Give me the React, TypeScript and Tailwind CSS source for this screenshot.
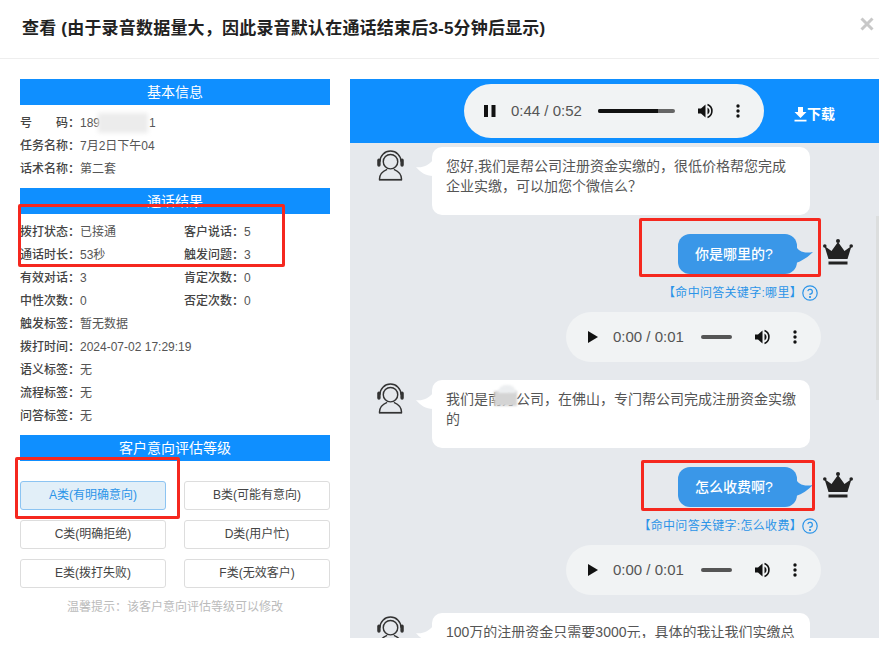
const font = { fontFamily: '"Liberation Sans", "Noto Sans CJK SC", sans-serif' };

const Heading = ({ children }: { children: string }) => (
  <div className="h-[26px] bg-[#0f8fff] text-center text-[14px] leading-[26px] text-white">{children}</div>
);

const Row = ({ label, value }: { label: string; value: string }) => (
  <div className="flex h-[23px] items-center text-[12px] text-[#555]">
    <span className="w-[60px] shrink-0 font-medium text-[#444]">{label}</span>
    <span>{value}</span>
  </div>
);

const Pause = () => (
  <svg width="12" height="12" viewBox="0 0 12 12" className="shrink-0">
    <rect x="0" y="0" width="4" height="12" fill="#111" />
    <rect x="7.5" y="0" width="4" height="12" fill="#111" />
  </svg>
);

const Play = () => (
  <svg width="10" height="12" viewBox="0 0 10 12" className="shrink-0">
    <path d="M0 0 L10 6 L0 12 Z" fill="#111" />
  </svg>
);

const Volume = () => (
  <svg width="16" height="16" viewBox="0 0 16 16" className="shrink-0">
    <path d="M0 5.5 H3 L7.5 1.5 V14.5 L3 10.5 H0 Z" fill="#111" />
    <path d="M9.5 4.5 A4 4 0 0 1 9.5 11.5 Z" fill="#111" />
    <path d="M9.5 1.5 A7 7 0 0 1 9.5 14.5" stroke="#111" strokeWidth="1.6" fill="none" />
  </svg>
);

const Dots = () => (
  <svg width="4" height="14" viewBox="0 0 4 14" className="shrink-0">
    <circle cx="2" cy="2" r="1.7" fill="#111" />
    <circle cx="2" cy="7" r="1.7" fill="#111" />
    <circle cx="2" cy="12" r="1.7" fill="#111" />
  </svg>
);

const Agent = () => (
  <svg width="27" height="31" viewBox="0 0 28 32" className="shrink-0" fill="none" stroke="#333" strokeWidth="1.5">
    <path d="M3 12 A11 11 0 0 1 25 12" />
    <rect x="1" y="9.5" width="2" height="7" rx="1" fill="#333" />
    <rect x="25" y="9.5" width="2" height="7" rx="1" fill="#333" />
    <circle cx="14" cy="12" r="7.5" />
    <path d="M2.5 30.5 C2.5 24 8 21 10.5 20 M25.5 30.5 C25.5 24 20 21 17.5 20" />
    <path d="M2 30.8 H26" strokeWidth="1.8" />
  </svg>
);

const Crown = () => (
  <svg width="30" height="27" viewBox="0 0 30 27" className="mb-[3px] shrink-0">
    <circle cx="15" cy="2" r="2" fill="#222" />
    <circle cx="1.8" cy="7" r="1.8" fill="#222" />
    <circle cx="28.2" cy="7" r="1.8" fill="#222" />
    <path d="M1.5 7 L8.5 12 L15 3 L21.5 12 L28.5 7 L24.5 20 H5.5 Z" fill="#222" />
    <rect x="5.5" y="22.5" width="19" height="3" fill="#222" />
  </svg>
);

const AgentMsg = ({ text }: { text: string }) => (
  <div className="flex items-start pl-[27px]">
    <div className="mt-[3px]">
      <Agent />
    </div>
    <div className="relative ml-[28px] h-[68px] w-[378px] shrink-0 rounded-[10px] bg-white px-[14px] py-[9px] text-[14px] leading-[20px] text-[#555]">
      {text}
      <svg width="17" height="16" viewBox="0 0 17 16" className="absolute left-[-16px] top-[13px]">
        <path d="M0 7 C6 8 12 6 17 0 V16 C10 16 4 12 0 7 Z" fill="#fff" />
      </svg>
    </div>
  </div>
);

const UserMsg = ({ text, keyword }: { text: string; keyword: string }) => (
  <div>
    <div className="flex items-center justify-end pr-[26px]">
      <div className="relative mr-[26px] h-[40px] w-[119px] rounded-[12px] bg-[#3a97e8] pr-[7px] text-center text-[14px] font-medium leading-[40px] text-white">
        {text}
        <svg width="17" height="18" viewBox="0 0 17 18" className="absolute right-[-16px] top-[11px]">
          <path d="M0 0 C1 6 8 9 17 7 C12 12 6 16 0 18 Z" fill="#3a97e8" />
        </svg>
      </div>
      <Crown />
    </div>
    <div className="mt-[11px] flex items-center justify-end pr-[61px] text-[12px] leading-[16px] tracking-[0.3px] text-[#2b94e8]">
      <span>【{keyword}】</span>
      <svg width="16" height="16" viewBox="0 0 16 16" className="shrink-0" fill="none" stroke="#2b94e8" strokeWidth="1.2">
        <circle cx="8" cy="8" r="7.2" />
        <path d="M5.8 6.2 A2.3 2.3 0 1 1 8 9 V10" />
        <circle cx="8" cy="12" r="0.5" fill="#2b94e8" />
      </svg>
    </div>
    <div className="mr-[58px] mt-[11px] ml-auto flex h-[50px] w-[255px] items-center rounded-full bg-[#f1f3f4] pl-[22px] pr-[24px] text-[15px] text-[#555]">
      <Play />
      <span className="ml-[15px] whitespace-nowrap">0:00 / 0:01</span>
      <div className="ml-[17px] h-[4px] w-[31px] rounded-full bg-[#555]" />
      <div className="ml-auto flex items-center gap-[22px]">
        <Volume />
        <Dots />
      </div>
    </div>
  </div>
);

const levels = ['A类(有明确意向)', 'B类(可能有意向)', 'C类(明确拒绝)', 'D类(用户忙)', 'E类(拨打失败)', 'F类(无效客户)'];

export default function App() {
  return (
    <div className="relative h-[654px] w-[879px] overflow-hidden bg-white" style={font}>
      <div className="flex h-[59px] items-center border-b border-[#eee] pl-[22px] text-[17px] font-bold tracking-[0.2px] text-[#222]">
        查看 (由于录音数据量大，因此录音默认在通话结束后3-5分钟后显示)
      </div>
      <svg width="14" height="14" viewBox="0 0 14 14" className="absolute left-[860px] top-[17px]">
        <path d="M1.5 1.5 L12.5 12.5 M12.5 1.5 L1.5 12.5" stroke="#c8c8c8" strokeWidth="3" />
      </svg>

      <div className="flex pt-[20px]">
        <div className="ml-[20px] w-[310px] shrink-0">
          <Heading>基本信息</Heading>
          <div className="pt-[6px]">
            <div className="flex h-[23px] items-center text-[12px] text-[#555]">
              <span className="flex w-[60px] shrink-0 justify-between pr-[12px] font-medium text-[#444]">
                <span>号</span>
                <span className="mr-[-12px]">码：</span>
              </span>
              <span>189</span>
              <span className="ml-[49px]">1</span>
            </div>
            <Row label="任务名称：" value="7月2日下午04" />
            <Row label="话术名称：" value="第二套" />
          </div>
          <div className="mt-[8px]">
            <Heading>通话结果</Heading>
          </div>
          <div className="pt-[6px]">
            <div className="grid grid-cols-[164px_146px]">
              <Row label="拨打状态：" value="已接通" />
              <Row label="客户说话：" value="5" />
              <Row label="通话时长：" value="53秒" />
              <Row label="触发问题：" value="3" />
              <Row label="有效对话：" value="3" />
              <Row label="肯定次数：" value="0" />
              <Row label="中性次数：" value="0" />
              <Row label="否定次数：" value="0" />
            </div>
            <Row label="触发标签：" value="暂无数据" />
            <Row label="拨打时间：" value="2024-07-02 17:29:19" />
            <Row label="语义标签：" value="无" />
            <Row label="流程标签：" value="无" />
            <Row label="问答标签：" value="无" />
          </div>
          <div className="mt-[8px]">
            <Heading>客户意向评估等级</Heading>
          </div>
          <div className="mt-[20px] grid grid-cols-[146px_146px] justify-between gap-y-[10px]">
            {levels.map((level, i) => (
              <div
                key={level}
                className={
                  i === 0
                    ? 'h-[29px] rounded-[3px] border border-[#8cc4f2] bg-[#e2eff8] text-center text-[12px] leading-[27px] text-[#2b94e8]'
                    : 'h-[29px] rounded-[3px] border border-[#ddd] bg-white text-center text-[12px] leading-[27px] text-[#444]'
                }
              >
                {level}
              </div>
            ))}
          </div>
          <div className="mt-[11px] text-center text-[12px] leading-[16px] text-[#bbb]">
            温馨提示：该客户意向评估等级可以修改
          </div>
        </div>

        <div className="ml-[20px] h-[559px] flex-1 overflow-hidden bg-[#e6e9ed]">
          <div className="relative flex h-[64px] items-center bg-[#0f8fff]">
            <div className="ml-[114px] flex h-[54px] w-[300px] items-center rounded-full bg-[#f1f3f4] pl-[20px] pr-[24px] text-[15px] text-[#555]">
              <Pause />
              <span className="ml-[15px] whitespace-nowrap">0:44 / 0:52</span>
              <div className="ml-[16px] h-[4px] w-[77px] overflow-hidden rounded-full bg-[#666]">
                <div className="h-full w-[60px] bg-[#111]" />
              </div>
              <div className="ml-auto flex items-center gap-[22px]">
                <Volume />
                <Dots />
              </div>
            </div>
            <div className="ml-[30px] mt-[7px] flex items-center text-[14px] font-bold text-white">
              <svg width="13" height="15" viewBox="0 0 13 15" className="shrink-0">
                <path d="M4 0 H9 V5 H12.5 L6.5 11 L0.5 5 H4 Z M0.5 12.8 H12.5 V14.5 H0.5 Z" fill="#fff" />
              </svg>
              下载
            </div>
          </div>
          <div className="pt-[4px]">
            <AgentMsg text="您好,我们是帮公司注册资金实缴的，很低价格帮您完成企业实缴，可以加您个微信么？" />
            <div className="mt-[19px]">
              <UserMsg text="你是哪里的?" keyword="命中问答关键字:哪里" />
            </div>
            <div className="mt-[18px]">
              <AgentMsg text="我们是南方公司，在佛山，专门帮公司完成注册资金实缴的" />
            </div>
            <div className="mt-[19px]">
              <UserMsg text="怎么收费啊?" keyword="命中问答关键字:怎么收费" />
            </div>
            <div className="mt-[18px]">
              <AgentMsg text="100万的注册资金只需要3000元，具体的我让我们实缴总监联系您" />
            </div>
          </div>
        </div>
      </div>

      {/* 滚动条 */}
      <div className="absolute left-[876px] top-[216px] h-[184px] w-[3px] bg-[#dcdede]" />

      {/* 打码 */}
      <div className="absolute left-[98px] top-[113px] h-[20px] w-[50px] bg-[#ececec] blur-[2px]" />
      <div className="absolute left-[494px] top-[391px] h-[15px] w-[23px] bg-[#d4d4d4] blur-[1px]" />
      <div className="absolute left-[498px] top-[385px] h-[8px] w-[18px] rounded-t-full bg-[#eceef0] blur-[1px]" />

      {/* 红框标注 */}
      <div className="absolute left-[18px] top-[204px] h-[63px] w-[267px] rounded-[2px] border-[3px] border-[#f5281f]" />
      <div className="absolute left-[15px] top-[457px] h-[62px] w-[165px] rounded-[2px] border-[3px] border-[#f5281f]" />
      <div className="absolute left-[639px] top-[218px] h-[59px] w-[182px] rounded-[2px] border-[3px] border-[#f5281f]" />
      <div className="absolute left-[641px] top-[460px] h-[51px] w-[174px] rounded-[2px] border-[3px] border-[#f5281f]" />
    </div>
  );
}
